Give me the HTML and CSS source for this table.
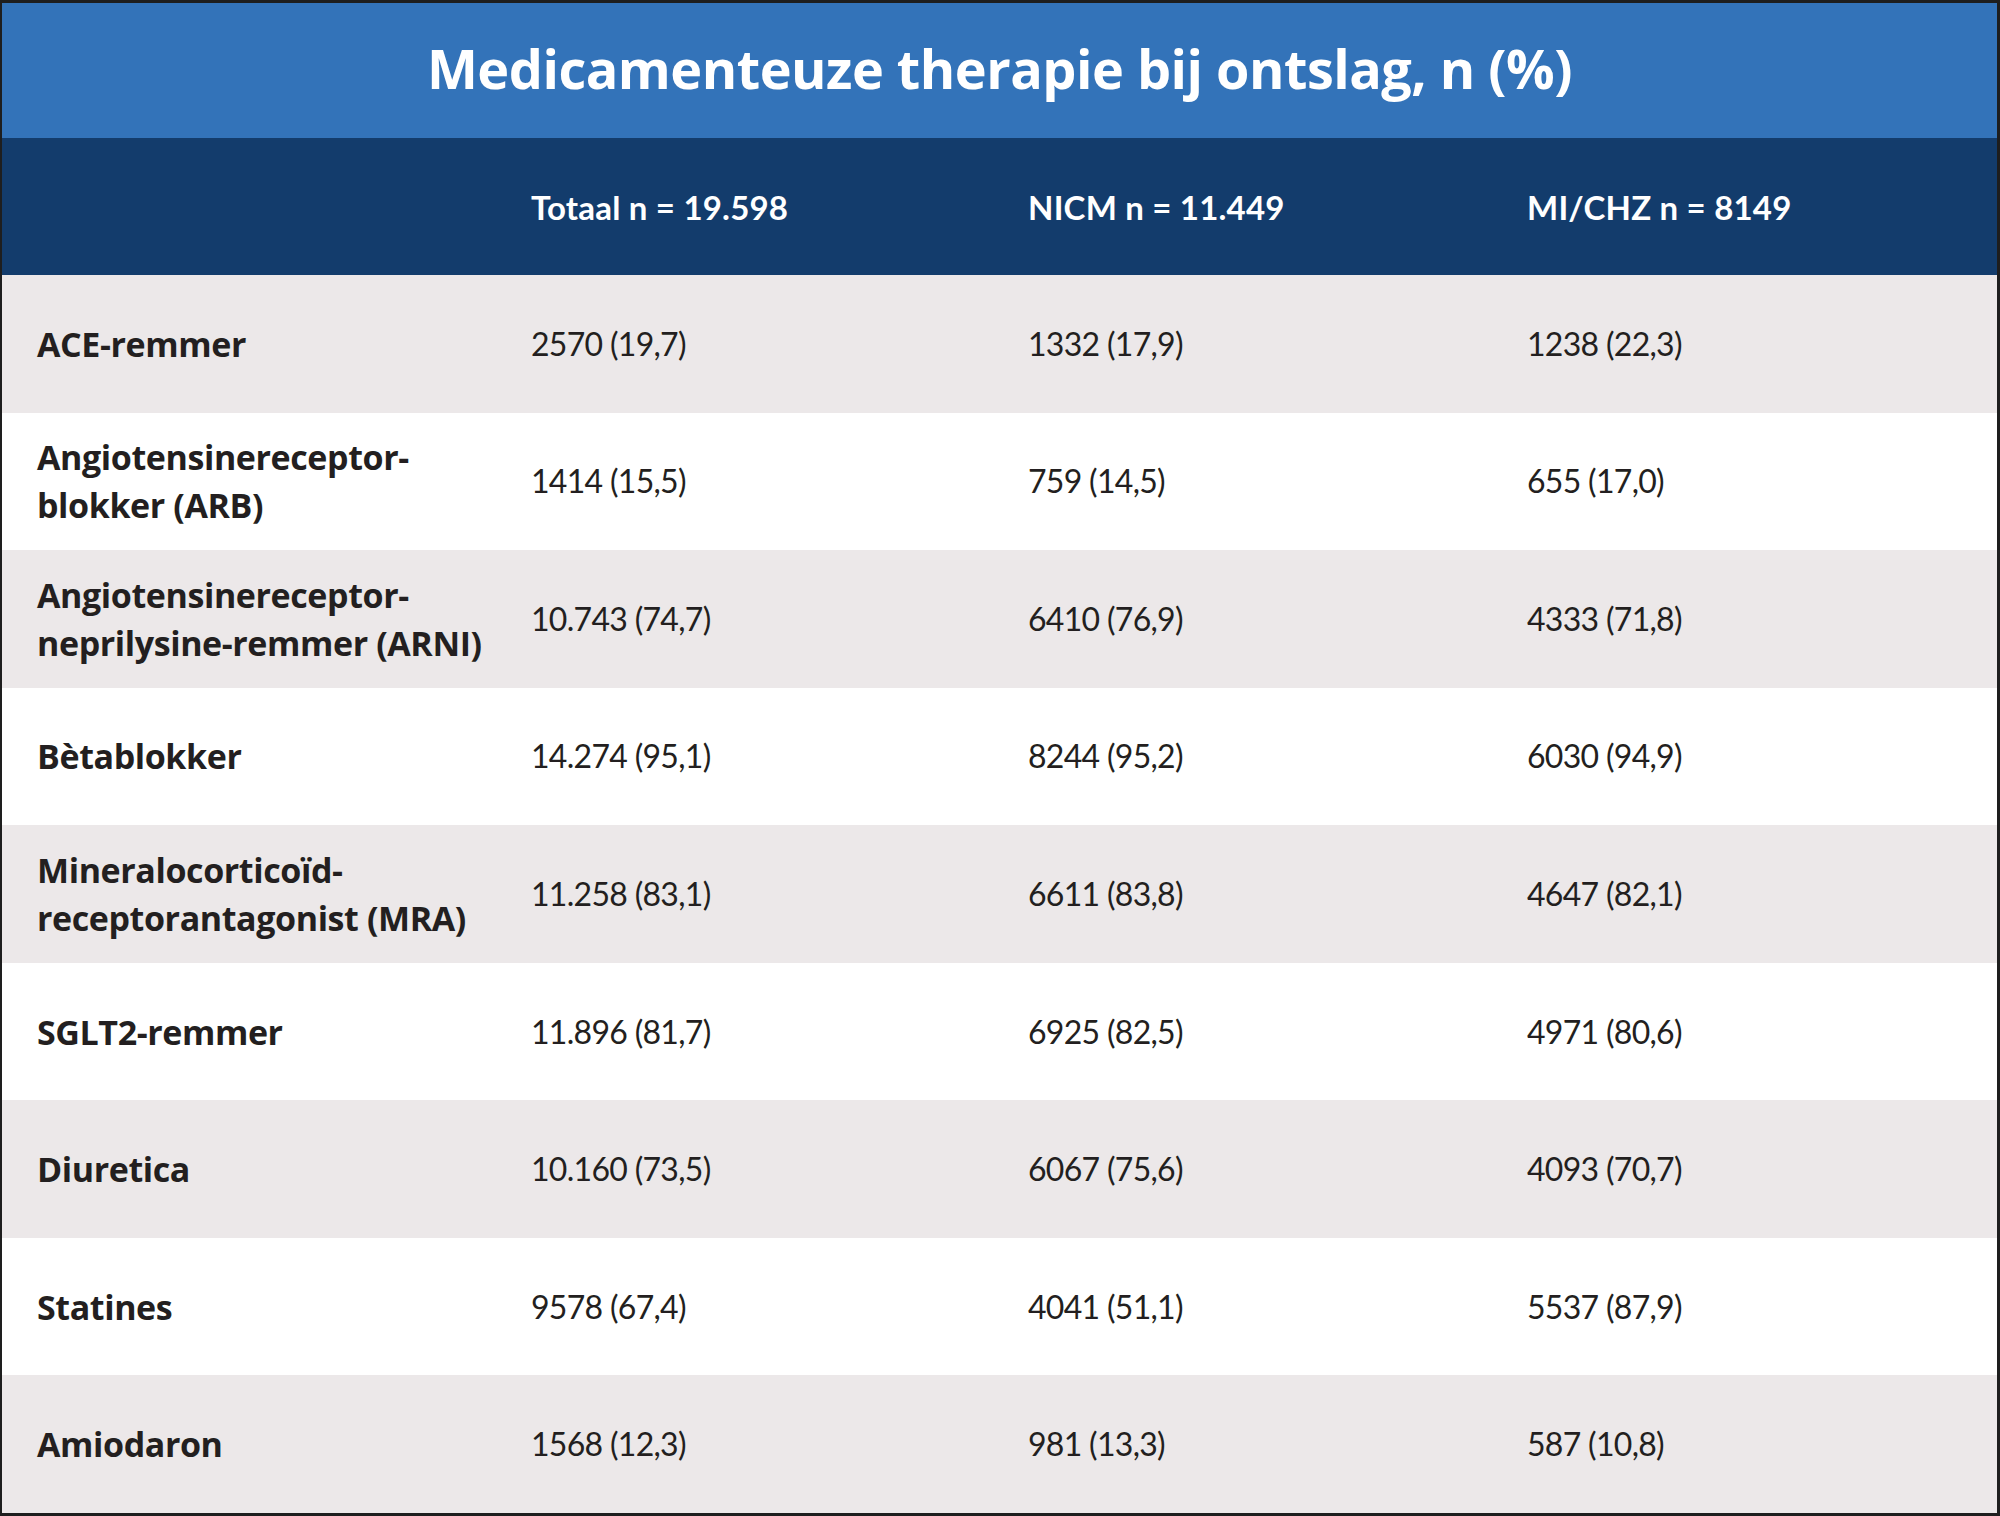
FILE: index.html
```html
<!DOCTYPE html>
<html lang="nl">
<head>
<meta charset="utf-8">
<title>Medicamenteuze therapie bij ontslag</title>
<link rel="stylesheet" href="styles.css">
</head>
<body>
<div class="frame">
  <div class="title">Medicamenteuze therapie bij ontslag, n (%)</div>
  <div class="table">
    <div class="row head">
      <div class="cell"></div>
      <div class="cell">Totaal n = 19.598</div>
      <div class="cell">NICM n = 11.449</div>
      <div class="cell">MI/CHZ n = 8149</div>
    </div>
    <div class="row gray">
      <div class="cell label">ACE-remmer</div>
      <div class="cell">2570 (19,7)</div>
      <div class="cell">1332 (17,9)</div>
      <div class="cell">1238 (22,3)</div>
    </div>
    <div class="row">
      <div class="cell label">Angiotensinereceptor-<br>blokker (ARB)</div>
      <div class="cell">1414 (15,5)</div>
      <div class="cell">759 (14,5)</div>
      <div class="cell">655 (17,0)</div>
    </div>
    <div class="row gray">
      <div class="cell label">Angiotensinereceptor-<br>neprilysine-remmer (ARNI)</div>
      <div class="cell">10.743 (74,7)</div>
      <div class="cell">6410 (76,9)</div>
      <div class="cell">4333 (71,8)</div>
    </div>
    <div class="row">
      <div class="cell label">Bètablokker</div>
      <div class="cell">14.274 (95,1)</div>
      <div class="cell">8244 (95,2)</div>
      <div class="cell">6030 (94,9)</div>
    </div>
    <div class="row gray">
      <div class="cell label">Mineralocorticoïd-<br>receptorantagonist (MRA)</div>
      <div class="cell">11.258 (83,1)</div>
      <div class="cell">6611 (83,8)</div>
      <div class="cell">4647 (82,1)</div>
    </div>
    <div class="row">
      <div class="cell label">SGLT2-remmer</div>
      <div class="cell">11.896 (81,7)</div>
      <div class="cell">6925 (82,5)</div>
      <div class="cell">4971 (80,6)</div>
    </div>
    <div class="row gray">
      <div class="cell label">Diuretica</div>
      <div class="cell">10.160 (73,5)</div>
      <div class="cell">6067 (75,6)</div>
      <div class="cell">4093 (70,7)</div>
    </div>
    <div class="row">
      <div class="cell label">Statines</div>
      <div class="cell">9578 (67,4)</div>
      <div class="cell">4041 (51,1)</div>
      <div class="cell">5537 (87,9)</div>
    </div>
    <div class="row gray">
      <div class="cell label">Amiodaron</div>
      <div class="cell">1568 (12,3)</div>
      <div class="cell">981 (13,3)</div>
      <div class="cell">587 (10,8)</div>
    </div>
  </div>
</div>
</body>
</html>
```

FILE: styles.css
```css
html, body {
  margin: 0;
  padding: 0;
  background: #1e1e1e;
}
.frame {
  box-sizing: border-box;
  width: 2000px;
  height: 1516px;
  border-style: solid;
  border-color: #1e1e1e;
  border-width: 3px 3px 3px 2px;
  display: flex;
  flex-direction: column;
  font-family: Lato, "Liberation Sans", sans-serif;
  color: #231f20;
}
.title {
  height: 135px;
  flex: none;
  background: #3373b9;
  color: #ffffff;
  display: flex;
  align-items: center;
  justify-content: center;
  font-family: "Open Sans", Lato, sans-serif;
  font-size: 54px;
  font-weight: 700;
  letter-spacing: -0.5px;
  padding-bottom: 6px;
  box-sizing: border-box;
}
.table {
  flex: 1;
  display: grid;
  grid-template-rows: 137px repeat(9, 1fr);
}
.row {
  display: grid;
  grid-template-columns: 492px 497px 499px 1fr;
  background: #ffffff;
}
.row.gray {
  background: #ece8e9;
}
.row.head {
  background: #133c6c;
  color: #ffffff;
  font-weight: 700;
}
.row.head .cell {
  font-size: 33px;
  letter-spacing: 0.2px;
}
.cell {
  display: flex;
  align-items: center;
  padding-left: 37px;
  font-size: 32px;
  line-height: 48px;
  letter-spacing: -0.7px;
}
.label {
  padding-left: 35px;
  font-family: "Open Sans", Lato, sans-serif;
  font-weight: 700;
  font-size: 34px;
  letter-spacing: -0.4px;
}
```
